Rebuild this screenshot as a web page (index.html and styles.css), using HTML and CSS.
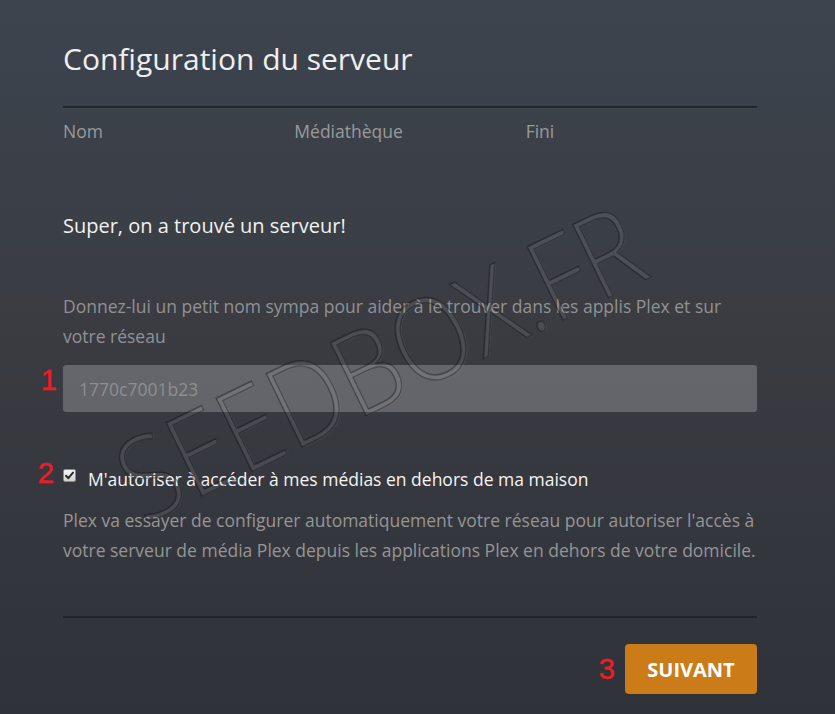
FILE: index.html
```html
<!DOCTYPE html>
<html lang="fr">
<head>
    <meta charset="UTF-8">
    <meta name="viewport" content="width=device-width, initial-scale=1.0">
    <title>Configuration du serveur</title>
    <link rel="stylesheet" href="styles.css">
</head>
<body>

<div class="screen">
    <div class="setup">
        <h1>Configuration du serveur</h1>

        <div class="steps">
            <div class="step">Nom</div>
            <div class="step">Médiathèque</div>
            <div class="step">Fini</div>
        </div>

        <h2 class="found">Super, on a trouvé un serveur!</h2>

        <p class="desc">Donnez-lui un petit nom sympa pour aider à le trouver dans les applis Plex et sur votre réseau</p>

        <div class="field">
            <span class="mark mark-1">1</span>
            <input type="text" class="name-input" placeholder="1770c7001b23">
        </div>

        <label class="remote">
            <span class="mark mark-2">2</span>
            <span class="check-box">
                <svg width="11" height="11" viewBox="0 0 11 11"><path d="M2 5.8 L4.4 8.2 L9 2.6" fill="none" stroke="#2b2b2b" stroke-width="2" stroke-linecap="round" stroke-linejoin="round"/></svg>
            </span>
            <span class="remote-text">M'autoriser à accéder à mes médias en dehors de ma maison</span>
        </label>

        <p class="help">Plex va essayer de configurer automatiquement votre réseau pour autoriser l'accès à votre serveur de média Plex depuis les applications Plex en dehors de votre domicile.</p>

        <div class="actions">
            <span class="mark mark-3">3</span>
            <button class="next-btn">Suivant</button>
        </div>
    </div>

    <!-- watermark over the form -->
    <div class="watermark">SEEDBOX.FR</div>
</div>

</body>
</html>
```

FILE: styles.css
```css
/* Page and background */
body {
    margin: 0;
    padding: 0;
    font-family: "Open Sans", sans-serif;
    background: linear-gradient(180deg, #3c444e 0%, #3a3c42 45%, #30323a 100%);
    min-height: 714px;
    overflow: hidden;
}

.screen {
    position: relative;
    height: 714px;
}

.setup {
    width: 694px;
    padding: 39px 0 0 63px;
}

h1 {
    margin: 0 0 27px;
    font-size: 30px;
    line-height: 40px;
    font-weight: 400;
    color: #efefef;
}

/* Steps row under the title */
.steps {
    display: grid;
    grid-template-columns: repeat(3, 1fr);
    border-top: 2px solid #24272c;
    box-shadow: inset 0 1px 0 rgba(255, 255, 255, 0.03);
    padding-top: 10px;
}

.step {
    font-size: 17.5px;
    line-height: 26px;
    color: #9a9a9a;
}

.found {
    margin: 68px 0 0;
    font-size: 20px;
    line-height: 28px;
    font-weight: 400;
    color: #f2f2f2;
}

.desc {
    margin: 51px 0 0;
    font-size: 17.5px;
    line-height: 30px;
    color: #909194;
}

/* Server name input */
.field {
    position: relative;
    margin-top: 14px;
}

.name-input {
    display: block;
    box-sizing: border-box;
    width: 100%;
    height: 47px;
    padding: 0 16px;
    border: none;
    border-radius: 3px;
    background-color: rgba(255, 255, 255, 0.22);
    font-family: "Open Sans", sans-serif;
    font-size: 17.5px;
    color: #ddd;
    outline: none;
}

.name-input::placeholder {
    color: #8e8f91;
}

/* Remote access checkbox */
.remote {
    position: relative;
    display: flex;
    align-items: flex-start;
    margin-top: 54px;
    cursor: pointer;
}

.check-box {
    box-sizing: border-box;
    width: 13px;
    height: 13px;
    margin-top: 3px;
    margin-right: 12px;
    border: 1px solid #8a8a8a;
    border-radius: 2px;
    background: linear-gradient(180deg, #f6f6f6 0%, #d2d2d2 100%);
    display: flex;
    align-items: center;
    justify-content: center;
}

.check-box svg {
    display: block;
}

.remote-text {
    font-size: 17.5px;
    line-height: 26px;
    color: #f4f4f4;
}

.help {
    margin: 13px 0 0;
    font-size: 17.5px;
    line-height: 30px;
    color: #959595;
}

/* Bottom bar with the next button */
.actions {
    display: flex;
    justify-content: flex-end;
    align-items: flex-start;
    gap: 10px;
    margin-top: 51px;
    padding-top: 26px;
    border-top: 2px solid #222428;
}

.next-btn {
    width: 132px;
    height: 50px;
    border: none;
    border-radius: 4px;
    background-color: #cc7b19;
    color: #fff;
    font-family: "Open Sans", sans-serif;
    font-size: 20px;
    font-weight: 700;
    text-transform: uppercase;
    cursor: pointer;
}

/* Red annotation numbers */
.mark {
    font-family: "Liberation Sans", Arial, sans-serif;
    font-size: 29px;
    line-height: 29px;
    color: #ee1c24;
    -webkit-text-stroke: 0.4px #ee1c24;
}

.mark-1,
.mark-2 {
    position: absolute;
    right: 100%;
}

.mark-1 {
    top: 1px;
    margin-right: 6px;
}

.mark-2 {
    top: -7px;
    margin-right: 9px;
}

.mark-3 {
    margin-top: 11px;
}

/* Embossed watermark */
.watermark {
    position: absolute;
    left: 379px;
    top: 361px;
    transform: translate(-50%, -50%) rotate(-26deg) scale(0.99, 1.12);
    font-family: "Open Sans", sans-serif;
    font-weight: 300;
    font-size: 102px;
    line-height: 1;
    white-space: nowrap;
    color: rgba(255, 255, 255, 0.025);
    -webkit-text-stroke: 1.3px rgba(16, 16, 20, 0.38);
    text-shadow: 1px 1px 0 rgba(255, 255, 255, 0.07);
    pointer-events: none;
}
```
